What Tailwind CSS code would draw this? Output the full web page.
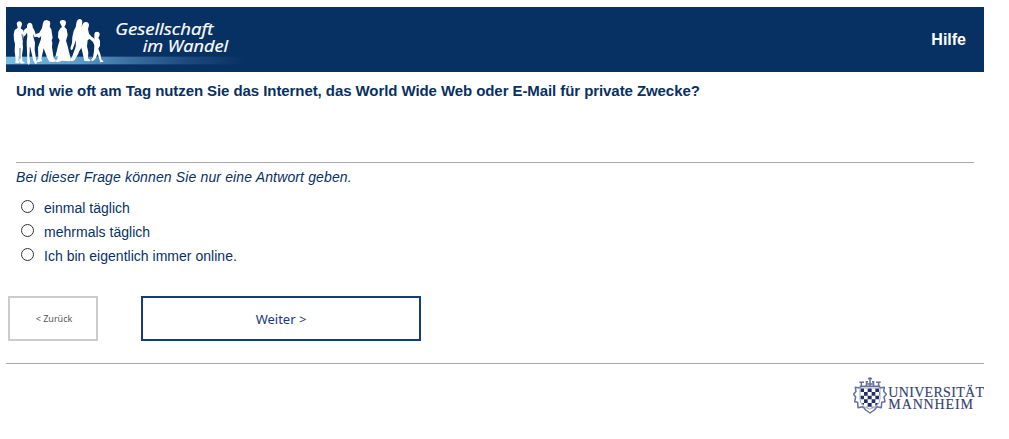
<!DOCTYPE html>
<html lang="de">
<head>
<meta charset="utf-8">
<title>Gesellschaft im Wandel</title>
<script src="https://cdn.jsdelivr.net/npm/@tailwindcss/browser@4"></script>
</head>
<body class="bg-white font-['Liberation_Sans',Arial,sans-serif] text-[#083163]">
<div class="ml-[6px] w-[978px] pt-[7px]">
  <header class="flex h-[65px] items-center justify-between bg-[#083163] pr-[18px]">
    <svg class="h-[65px] w-[250px]" viewBox="18 21 750 195" role="img" aria-label="Gesellschaft im Wandel">
      <defs>
        <linearGradient id="band" x1="0" x2="1" y1="0" y2="0">
          <stop offset="0" stop-color="#79bde4"/>
          <stop offset=".3" stop-color="#5c9dca"/>
          <stop offset=".5" stop-color="#3d73a3"/>
          <stop offset=".75" stop-color="#1d4b7e"/>
          <stop offset="1" stop-color="#083163"/>
        </linearGradient>
      </defs>
      <rect x="18" y="170" width="715" height="23" fill="url(#band)"/>
      <g fill="#fff">
        <path d="M50 70q2-6 8-6 8 1 8 9-1 7-4 10l1 3 7 5 2 11-3 17-1 12 1 13-3 22 1 16 8 6-8 3-8-3-2-22-2 15 3 4-3 5-9-1 1-10-3-25 1-23-3-11-1-17 3-13 9-6z"/>
        <path d="M81 77q2-9 9-9 8 1 8 14l5 9 5 14 9-2 1 5-14 4-5-10 2 12 4 14-1 22 5 32 2 8-5 2-6-10-9-39-3 24 2 20-3 8-5-5-1-34-1-30 2-18-1-10-7 11-7-7 7-14 7-5z"/>
        <path d="M129 69l3-7 8-2 9 4 2 6-2 10 5 8 4 26-3 7 2 7-1 13 5 34 6 5-4 6-15-1-7-13-10-27-7 31 3 7-11 3-8-1 7-9-1-34 8-22 2-12-7 6-10-7 1-5 10-4 8-14z"/>
        <path d="M179 67q2-8 10-7 9 0 9 9-1 8-5 11l7 8 3 17-5 17 5 17 10 41-4 4-23-2-13 5-10-3 9-6 1-9-7 2 8-34 5-16-5-9 1-17 6-10 5-4z"/>
        <path d="M230 65q2-8 9-8 8 1 8 9l-2 13 2 18-3 25 2 19-13 19-17 24-7-5 6-5 12-34 1-20-10 28-4 3-3-6 5-16 1-18 4-18 6-12z"/>
        <path d="M248 73q3-8 10-7 9 1 9 10l-3 11 3 14 8 9 7 5-2 6-12-4-5 4-2 18 4 18-1 18 8 6-4 3-15-1-6-28-4-16-9 24-10 17-8 4-5-5 7-6 9-20 6-24 3-27 5-16z"/>
        <path d="M283 102q1-7 8-7 9 1 8 9-1 6-4 9l5 9v15l-5 9 6 16 3 16 7 7-10 2-8-26-6 14-8 9-6-4 6-8 3-19 1-17-4-10-9-8 3-5 10 5z"/>
      </g>
      <g fill="#fff" stroke="#fff" stroke-width=".7" font-family="'Open Sans','Noto Sans',sans-serif" font-style="italic" font-size="50">
        <text x="346" y="104" textLength="294" lengthAdjust="spacingAndGlyphs">Gesellschaft</text>
        <text x="428" y="156" textLength="256" lengthAdjust="spacingAndGlyphs">im Wandel</text>
      </g>
      <path d="M60 144v32M90 142l1 20M66 102l3 20" stroke="#083163" stroke-width="2" fill="none"/>
    </svg>
    <a class="text-base font-bold text-white">Hilfe</a>
  </header>

  <main>
    <section class="mx-[10px] h-[91px] border-b border-[#a9a9a9] pt-[9px]">
      <h1 class="text-[15px] leading-5 font-bold tracking-[-0.075px] whitespace-nowrap">Und wie oft am Tag nutzen Sie das Internet, das World Wide Web oder E-Mail für private Zwecke?</h1>
    </section>
    <p class="ml-[10px] pt-[4px] text-[14px] leading-5 tracking-[0.14px] italic">Bei dieser Frage können Sie nur eine Antwort geben.</p>
    <div class="mt-[9px] ml-[15px] text-[14px] tracking-[0.02px]">
      <label class="flex h-6 items-center"><span class="-mt-[3px] mr-[10px] size-[13px] rounded-full border border-[#333]"></span>einmal täglich</label>
      <label class="flex h-6 items-center"><span class="-mt-[3px] mr-[10px] size-[13px] rounded-full border border-[#333]"></span>mehrmals täglich</label>
      <label class="flex h-6 items-center"><span class="-mt-[3px] mr-[10px] size-[13px] rounded-full border border-[#333]"></span>Ich bin eigentlich immer online.</label>
    </div>
    <div class="mt-[28px] ml-[2px] flex gap-[43px] font-['Noto_Sans',sans-serif]">
      <button class="h-[45px] w-[90px] border-2 border-[#ccc] pl-[2px] text-[9px] text-[#555]">&lt; Zurück</button>
      <button class="h-[45px] w-[280px] border-2 border-[#163a7a] pt-[2px] text-[13px] text-[#163a7a]">Weiter &gt;</button>
    </div>
  </main>

  <footer class="mt-[22px] flex justify-end border-t border-[#a9a9a9] pt-[11px]">
    <svg class="h-[42px] w-[132px]" viewBox="36 60 396 126" role="img" aria-label="Universität Mannheim">
      <g fill="none" stroke="#65719b" stroke-width="4.5" stroke-linejoin="round">
        <path d="M59 99l-13-2 2 12-7 9 6 8-3 14 9 2 1 16 15-3 8 10 13 9 13-9 8-10 13 3 1-16 10-2-3-14 7-8-8-9 2-12-13 2"/>
        <path d="M61 99v-5h58v5M64 93V82M116 93V82M58 82h14M108 82h14M79 93l1-13M101 93l-1-13M77 80h7M96 80h7M84 71l6-2 6 2M90 69v24M82 87h16"/>
      </g>
      <path d="M60 99v32q1 25 29 31 30-7 31-31V99z" fill="#fff" stroke="#8d97b6" stroke-width="2.5"/>
      <clipPath id="shield"><path d="M61 100h58v30q-2 23-29 30-28-8-29-30z"/></clipPath>
      <g clip-path="url(#shield)" fill="#202f66">
        <path d="M61 100h11v11h-11zM83 100h12v11h-12zM106 100h11v11h-11zM72 111h11v11h-11zM95 111h11v11h-11zM117 111h3v11h-3zM61 122h11v11h-11zM83 122h12v11h-12zM106 122h11v11h-11zM72 133h11v11h-11zM95 133h11v11h-11zM61 144h11v10h-11zM83 144h12v11h-12zM106 144h11v10h-11zM72 155h11v6h-11zM95 155h11v6h-11z"/>
      </g>
      <g fill="#35436f" stroke="#35436f" stroke-width=".4" font-family="'Liberation Serif',serif" font-size="42">
        <text x="145" y="127" textLength="287">UNIVERSITÄT</text>
        <text x="145" y="163" textLength="254">MANNHEIM</text>
      </g>
    </svg>
  </footer>
</div>
</body>
</html>
